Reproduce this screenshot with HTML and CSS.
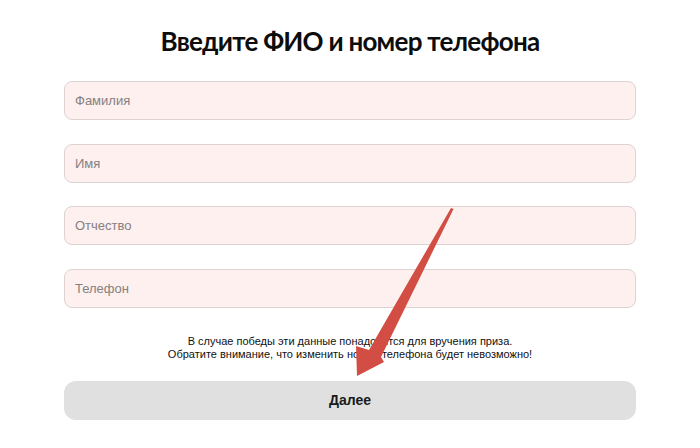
FILE: index.html
```html
<!DOCTYPE html>
<html lang="ru">
<head>
<meta charset="utf-8">
<link rel="stylesheet" href="styles.css">
</head>
<body>
<main class="page">
  <h1 class="title">Введите ФИО и номер телефона</h1>
  <form class="form">
    <input class="field" type="text" placeholder="Фамилия">
    <input class="field" type="text" placeholder="Имя">
    <input class="field" type="text" placeholder="Отчество">
    <input class="field" type="tel" placeholder="Телефон">
    <p class="note">В случае победы эти данные понадобятся для вручения приза.<br>Обратите внимание, что изменить номер телефона будет невозможно!</p>
    <button class="next" type="button">Далее</button>
  </form>
</main>
<svg class="arrow" width="700" height="448" viewBox="0 0 700 448">
  <polygon fill="#d24d43" points="451,208 453.5,209 381,357 384,362 357,376 356,346 369,350"/>
</svg>
</body>
</html>
```
FILE: styles.css
```css
html, body {
  margin: 0;
  padding: 0;
  background: #ffffff;
}
body {
  font-family: "Liberation Sans", Arial, sans-serif;
  color: #111;
  position: relative;
  width: 700px;
  height: 448px;
  overflow: hidden;
}
.page {
  width: 572px;
  margin: 0 auto;
  padding-top: 23px;
}
.title {
  margin: 0 0 22px;
  font-family: Lato, "Noto Sans", sans-serif;
  font-weight: 700;
  font-size: 26px;
  letter-spacing: -0.75px;
  line-height: 36px;
  text-align: center;
  color: #0d0d0d;
}
.form {
  display: flex;
  flex-direction: column;
}
.field {
  box-sizing: border-box;
  height: 39px;
  margin: 0 0 23.5px;
  padding: 0 10px;
  border: 1px solid #ddd3d3;
  border-radius: 8px;
  background: #fdf0ef;
  font-family: "Liberation Sans", Arial, sans-serif;
  font-size: 13px;
  color: #333;
  outline: none;
}
.field::placeholder {
  color: #858080;
}
.form .field:nth-of-type(4) {
  margin-bottom: 0;
}
.note {
  margin: 27px 0 20px;
  font-size: 11px;
  line-height: 13px;
  text-align: center;
  color: #111;
}
.next {
  box-sizing: border-box;
  height: 39px;
  border: none;
  border-radius: 12px;
  background: #e0e0e0;
  font-family: "Liberation Sans", Arial, sans-serif;
  font-size: 14px;
  font-weight: 700;
  color: #1a1a1a;
}
.arrow {
  position: absolute;
  left: 0;
  top: 0;
  pointer-events: none;
}
```
